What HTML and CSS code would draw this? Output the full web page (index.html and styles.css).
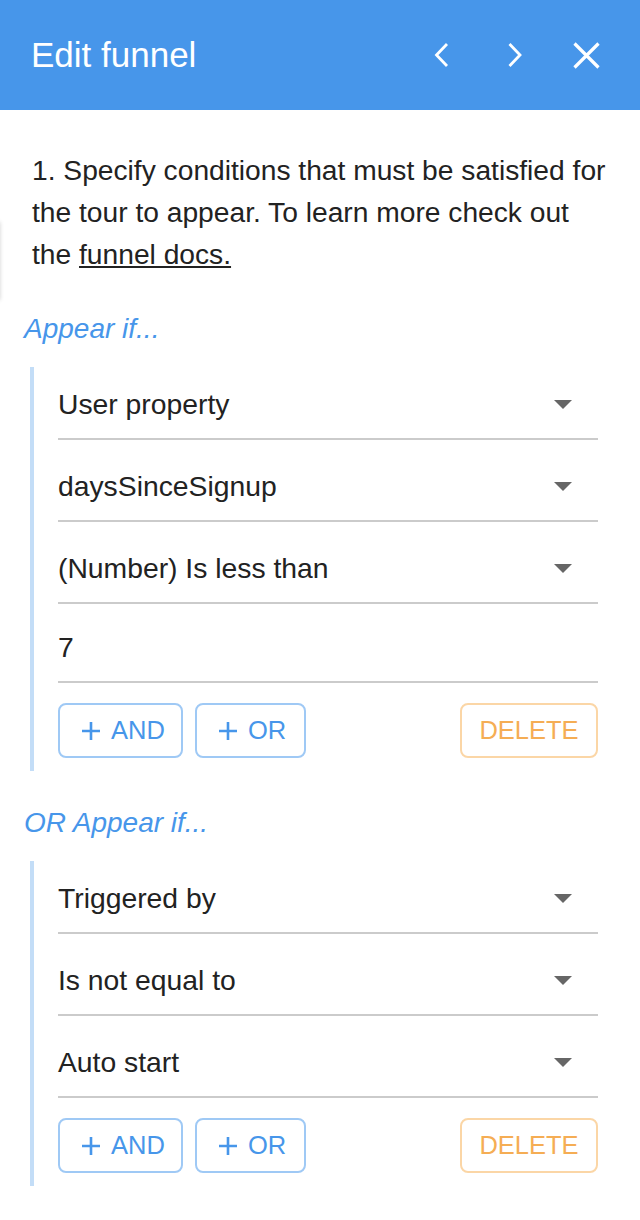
FILE: index.html
```html
<!DOCTYPE html>
<html lang="en">
<head>
  <meta charset="UTF-8">
  <meta name="viewport" content="width=device-width, initial-scale=1.0">
  <title>Edit funnel</title>
  <link rel="stylesheet" href="styles.css">
</head>
<body>
  <div class="edge-tab"></div>

  <div class="header">
    <h1>Edit funnel</h1>
    <div class="header-actions">
      <button class="icon-btn" aria-label="Previous">
        <svg width="30" height="30" viewBox="0 0 30 30"><path d="M20 4 L9.5 15 L20 26" fill="none" stroke="#fff" stroke-width="2.8"/></svg>
      </button>
      <button class="icon-btn" aria-label="Next">
        <svg width="30" height="30" viewBox="0 0 30 30"><path d="M10.5 4 L21 15 L10.5 26" fill="none" stroke="#fff" stroke-width="2.8"/></svg>
      </button>
      <button class="icon-btn" aria-label="Close">
        <svg width="30" height="30" viewBox="0 0 30 30"><path d="M3.5 3.5 L27.5 27.5 M27.5 3.5 L3.5 27.5" fill="none" stroke="#fff" stroke-width="3.2"/></svg>
      </button>
    </div>
  </div>

  <div class="content">
    <p class="intro">1. Specify conditions that must be satisfied for the tour to appear. To learn more check out the <a href="#">funnel docs.</a></p>

    <h2 class="group-title">Appear if...</h2>
    <div class="group">
      <div class="field select">User property<span class="caret"></span></div>
      <div class="field select">daysSinceSignup<span class="caret"></span></div>
      <div class="field select">(Number) Is less than<span class="caret"></span></div>
      <div class="field input">7</div>
      <div class="actions">
        <button class="btn btn-and"><svg class="plus" width="18" height="18" viewBox="0 0 18 18"><path d="M9 0 V18 M0 9 H18" stroke="#4796ea" stroke-width="2.6"/></svg>AND</button>
        <button class="btn btn-or"><svg class="plus" width="18" height="18" viewBox="0 0 18 18"><path d="M9 0 V18 M0 9 H18" stroke="#4796ea" stroke-width="2.6"/></svg>OR</button>
        <button class="btn btn-delete">DELETE</button>
      </div>
    </div>

    <h2 class="group-title">OR Appear if...</h2>
    <div class="group">
      <div class="field select">Triggered by<span class="caret"></span></div>
      <div class="field select">Is not equal to<span class="caret"></span></div>
      <div class="field select">Auto start<span class="caret"></span></div>
      <div class="actions">
        <button class="btn btn-and"><svg class="plus" width="18" height="18" viewBox="0 0 18 18"><path d="M9 0 V18 M0 9 H18" stroke="#4796ea" stroke-width="2.6"/></svg>AND</button>
        <button class="btn btn-or"><svg class="plus" width="18" height="18" viewBox="0 0 18 18"><path d="M9 0 V18 M0 9 H18" stroke="#4796ea" stroke-width="2.6"/></svg>OR</button>
        <button class="btn btn-delete">DELETE</button>
      </div>
    </div>
  </div>
</body>
</html>
```

FILE: styles.css
```css
body {
  margin: 0;
  background-color: #fff;
  font-family: 'Liberation Sans', Arial, sans-serif;
  color: #222;
  position: relative;
}

.edge-tab {
  position: absolute;
  left: -6px;
  top: 222px;
  width: 6px;
  height: 78px;
  box-shadow: 0 0 4px rgba(0, 0, 0, 0.18);
}

.header {
  background-color: #4796ea;
  height: 110px;
  display: flex;
  align-items: center;
  justify-content: space-between;
  padding: 0 39px 0 31px;
}

.header h1 {
  margin: 0;
  color: #fff;
  font-size: 35px;
  font-weight: normal;
}

.header-actions {
  display: flex;
  align-items: center;
  gap: 42px;
}

.icon-btn {
  background: none;
  border: none;
  padding: 0;
  display: flex;
  cursor: pointer;
}

.content {
  padding: 39px 24px 0 24px;
}

.intro {
  margin: 0 6px 37px 8px;
  font-size: 28.2px;
  line-height: 42px;
}

.intro a {
  color: #222;
  text-decoration: underline;
}

.group-title {
  margin: 0 0 21px;
  font-size: 28px;
  line-height: 34px;
  font-weight: normal;
  font-style: italic;
  color: #4796ea;
}

.group {
  border-left: 4px solid #c3ddf7;
  margin: 0 18px 35px 6px;
  padding: 0 0 13px 24px;
}

.field {
  height: 71px;
  box-sizing: border-box;
  border-bottom: 2px solid #cbcbcb;
  display: flex;
  align-items: flex-end;
  justify-content: space-between;
  padding: 0 26px 17px 0;
  font-size: 28.3px;
  line-height: 34px;
  color: #222;
  margin-top: 11px;
}

.field:first-child {
  margin-top: 0;
  height: 73px;
}

.field.input {
  margin-top: 6px;
  height: 73px;
}

.caret {
  width: 0;
  height: 0;
  border-left: 9.5px solid transparent;
  border-right: 9.5px solid transparent;
  border-top: 9.5px solid #666;
  margin-bottom: 12px;
}

.actions {
  display: flex;
  gap: 12px;
  margin-top: 20px;
}

.btn {
  height: 55px;
  box-sizing: border-box;
  border: 2px solid #9fc9f5;
  border-radius: 8px;
  background-color: #fff;
  color: #4796ea;
  font-family: 'Liberation Sans', Arial, sans-serif;
  font-size: 25.5px;
  padding: 0;
  display: flex;
  align-items: center;
  justify-content: center;
  cursor: pointer;
}

.plus {
  margin-right: 11px;
}

.btn-and {
  width: 125px;
  padding-left: 6px;
}

.btn-or {
  width: 111px;
  padding-left: 4px;
}

.btn-delete {
  width: 138px;
  margin-left: auto;
  border-color: #fbd6a6;
  color: #f5ad54;
}
```
